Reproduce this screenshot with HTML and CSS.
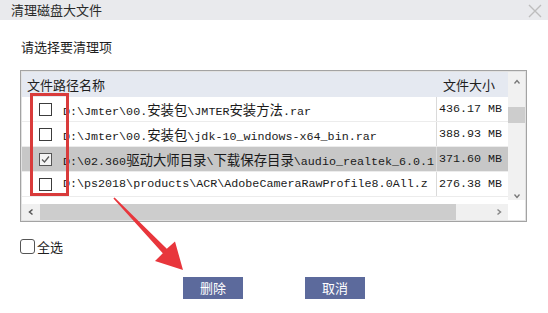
FILE: index.html
```html
<!DOCTYPE html>
<html lang="zh-CN">
<head>
<meta charset="utf-8">
<title>清理磁盘大文件</title>
<link rel="stylesheet" href="styles.css">
</head>
<body>
<div class="dialog">
  <div class="titlebar">
    <span class="title">清理磁盘大文件</span>
    <svg class="close" width="14" height="14" viewBox="0 0 14 14"><path d="M1 1L13 13M13 1L1 13" stroke="#bdbdbd" stroke-width="1.4" fill="none"/></svg>
  </div>
  <div class="content">
    <div class="prompt">请选择要清理项</div>
    <div class="table-wrap">
      <div class="table-inner">
        <div class="main">
          <div class="head">
            <div class="h-path">文件路径名称</div>
            <div class="h-size">文件大小</div>
          </div>
          <div class="row">
            <div class="c-chk"><span class="box"></span></div>
            <div class="c-path">D:\Jmter\00.<span class="z">安装包</span>\JMTER<span class="z">安装方法</span>.rar</div>
            <div class="c-size">436.17 MB</div>
          </div>
          <div class="row">
            <div class="c-chk"><span class="box"></span></div>
            <div class="c-path">D:\Jmter\00.<span class="z">安装包</span>\jdk-10_windows-x64_bin.rar</div>
            <div class="c-size">388.93 MB</div>
          </div>
          <div class="row sel">
            <div class="c-chk"><span class="box checked"><svg width="11" height="11" viewBox="0 0 11 11"><path d="M2 5.5L4.5 8L9 2.5" stroke="#5a5a5a" stroke-width="1.3" fill="none"/></svg></span></div>
            <div class="c-path">D:\02.360<span class="z">驱动大师目录</span>\<span class="z">下载保存目录</span>\audio_realtek_6.0.1</div>
            <div class="c-size">371.60 MB</div>
          </div>
          <div class="row">
            <div class="c-chk"><span class="box"></span></div>
            <div class="c-path">D:\ps2018\products\ACR\AdobeCameraRawProfile8.0All.z</div>
            <div class="c-size">276.38 MB</div>
          </div>
          <div class="spacer"></div>
          <div class="hscroll">
            <svg class="arr" width="8" height="8" viewBox="0 0 8 8"><path d="M5.5 1.5L2.5 4L5.5 6.5" stroke="#555" stroke-width="1.5" fill="none"/></svg>
            <div class="hthumb"></div>
            <div class="htrack"></div>
            <svg class="arr" width="8" height="8" viewBox="0 0 8 8"><path d="M2.5 1.5L5.5 4L2.5 6.5" stroke="#888" stroke-width="1.5" fill="none"/></svg>
          </div>
        </div>
        <div class="vscroll">
          <svg class="varr" width="8" height="8" viewBox="0 0 8 8"><path d="M1.5 5.5L4 2.5L6.5 5.5" stroke="#777" stroke-width="1.3" fill="none"/></svg>
          <div class="vgap"></div>
          <div class="vthumb"></div>
          <div class="vtrack"></div>
          <svg class="varr" width="8" height="8" viewBox="0 0 8 8"><path d="M1.5 2.5L4 5.5L6.5 2.5" stroke="#777" stroke-width="1.3" fill="none"/></svg>
          <div class="vcorner"></div>
        </div>
      </div>
      <div class="highlight"></div>
    </div>
    <label class="all"><span class="allbox"></span>全选</label>
    <div class="buttons">
      <button class="btn">删除</button>
      <button class="btn">取消</button>
    </div>
  </div>
  <svg class="arrow" width="548" height="313" viewBox="0 0 548 313">
    <polygon points="114.6,197.4 166.8,248.8 175,241.5 183,270 155,261 162.8,253.3 113.4,198.6" fill="#e8363c"/>
  </svg>
</div>
</body>
</html>
```
FILE: styles.css
```css
html, body {
  margin: 0;
  padding: 0;
  background: #ffffff;
}
body {
  width: 548px;
  height: 313px;
  overflow: hidden;
  font-family: "Noto Sans CJK SC", "Liberation Sans", sans-serif;
  font-size: 13px;
  color: #1e1e1e;
}
.dialog {
  position: relative;
  width: 548px;
  height: 313px;
}
.titlebar {
  height: 20px;
  background: #e9eaed;
  display: flex;
  align-items: center;
  justify-content: space-between;
  padding: 0 6px 0 11px;
}
.title {
  font-size: 13px;
  line-height: 20px;
  color: #2a2a2a;
}
.close {
  margin-top: 1px;
}
.content {
  padding: 0 21px 0 20px;
}
.prompt {
  margin-top: 18px;
  height: 18px;
  line-height: 18px;
  padding-left: 1px;
  font-size: 13px;
}
.table-wrap {
  position: relative;
  margin-top: 14px;
  width: 507px;
  height: 152px;
  box-sizing: border-box;
  border: 1px solid #a3a3a3;
}
.table-inner {
  display: flex;
  height: 100%;
  box-sizing: border-box;
  border: 1px solid #e2e2e2;
}
.main {
  width: 486px;
  display: flex;
  flex-direction: column;
  overflow: hidden;
}
.head {
  display: flex;
  height: 25px;
  background: #e5e9f1;
  line-height: 25px;
  font-size: 13px;
  flex: none;
}
.h-path {
  width: 414px;
  padding-left: 5px;
}
.h-size {
  padding-left: 2px;
}
.row {
  display: flex;
  height: 25px;
  line-height: 25px;
  box-sizing: border-box;
  border-bottom: 1px solid #ececec;
  flex: none;
}
.row.sel {
  background: #c7c7c7;
}
.c-chk {
  width: 36px;
  display: flex;
  align-items: center;
  padding-left: 17px;
  box-sizing: border-box;
  flex: none;
}
.box {
  width: 13px;
  height: 13px;
  box-sizing: border-box;
  border: 1px solid #3c3c3c;
  background: #ffffff;
  display: flex;
  align-items: center;
  justify-content: center;
}
.box.checked {
  background: #f4f4f4;
  border-color: #555;
}
.c-path {
  width: 378px;
  flex: none;
  padding-left: 5px;
  box-sizing: border-box;
  white-space: nowrap;
  overflow: hidden;
  font-family: "Liberation Mono", "DejaVu Sans Mono", monospace;
  font-size: 11.7px;
  color: #1a1a1a;
}
.z {
  font-family: "Noto Sans CJK SC", sans-serif;
  font-size: 13.4px;
}
.c-size {
  flex: 1;
  border-left: 1px solid #dadada;
  padding-left: 2px;
  white-space: nowrap;
  font-family: "Liberation Mono", "DejaVu Sans Mono", monospace;
  font-size: 11.7px;
  color: #1a1a1a;
}
.spacer {
  flex: 1;
}
.hscroll {
  height: 16px;
  display: flex;
  align-items: center;
  background: #f0f0f0;
  flex: none;
}
.arr {
  margin: 0 5px;
  flex: none;
}
.hthumb {
  width: 416px;
  height: 100%;
  background: #cdcdcd;
  flex: none;
}
.htrack {
  flex: 1;
}
.vscroll {
  width: 17px;
  display: flex;
  flex-direction: column;
  align-items: center;
  background: #f1f1f1;
}
.varr {
  margin-top: 6px;
  flex: none;
}
.vgap {
  height: 21px;
  flex: none;
}
.vthumb {
  width: 17px;
  height: 16px;
  background: #cdcdcd;
  flex: none;
}
.vtrack {
  flex: 1;
}
.vcorner {
  height: 20px;
  width: 17px;
  background: #ffffff;
  flex: none;
}
.highlight {
  position: absolute;
  left: 9px;
  top: 22px;
  width: 39px;
  height: 103px;
  box-sizing: border-box;
  border: 3px solid #d93b3b;
}
.all {
  display: flex;
  align-items: center;
  gap: 2px;
  margin-top: 17px;
  height: 15px;
  font-size: 13px;
  line-height: 15px;
}
.allbox {
  width: 15px;
  height: 15px;
  box-sizing: border-box;
  border: 1px solid #555;
  border-radius: 3px;
  background: #fff;
}
.buttons {
  display: flex;
  justify-content: center;
  gap: 62px;
  margin-top: 23px;
  padding-left: 1px;
}
.btn {
  width: 60px;
  height: 22px;
  border: none;
  padding: 0;
  background: #5c6a9c;
  color: #ffffff;
  font-family: "Noto Sans CJK SC", sans-serif;
  font-size: 13px;
  line-height: 22px;
}
.arrow {
  position: absolute;
  left: 0;
  top: 0;
  pointer-events: none;
}
```
